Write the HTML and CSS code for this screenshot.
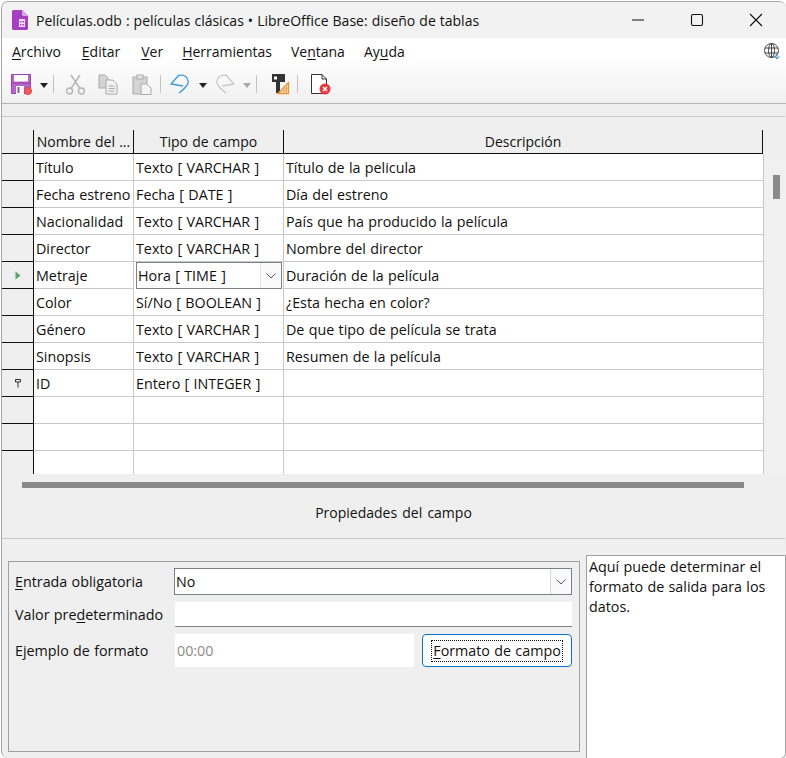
FILE: index.html
```html
<!DOCTYPE html>
<html lang="es">
<head>
<meta charset="UTF-8">
<meta name="viewport" content="width=device-width, initial-scale=1.0">
<title>Películas.odb</title>
<link rel="stylesheet" href="styles.css">
</head>
<body>
<div class="window">

    <div class="titlebar">
        <svg class="app-icon" width="18" height="22" viewBox="0 0 18 22">
            <path d="M2.5 1H11L17 7V19.500Q17 21 15.500 21H2.500Q1 21 1 19.500V2.500Q1 1 2.500 1Z" fill="#a63fc4"/>
            <path d="M11 1L17 7H12.500Q11 7 11 5.500Z" fill="#d9a6e6"/>
            <path d="M8 10H14V18H8ZM9 12H10.500V13.500H9ZM11.500 12H13V13.500H11.500ZM9 15H10.500V16.500H9ZM11.500 15H13V16.500H11.500Z" fill="#f3dff8" fill-rule="evenodd"/>
        </svg>
        <span class="title-text">Películas.odb : películas clásicas • LibreOffice Base: diseño de tablas</span>
        <div class="win-btns">
            <svg width="14" height="14" viewBox="0 0 14 14"><path d="M1 7H13" stroke="#111" stroke-width="1.100"/></svg>
            <svg width="14" height="14" viewBox="0 0 14 14"><rect x="1.500" y="1.500" width="11" height="11" rx="1.500" fill="none" stroke="#111" stroke-width="1.100"/></svg>
            <svg width="14" height="14" viewBox="0 0 14 14"><path d="M1 1L13 13M13 1L1 13" stroke="#111" stroke-width="1.100"/></svg>
        </div>
    </div>

    <div class="bars">
        <div class="menubar">
            <span class="m1"><u>A</u>rchivo</span>
            <span class="m2"><u>E</u>ditar</span>
            <span class="m3"><u>V</u>er</span>
            <span class="m4"><u>H</u>erramientas</span>
            <span class="m5">Ve<u>n</u>tana</span>
            <span class="m6">Ay<u>u</u>da</span>
            <svg class="globe" width="17" height="17" viewBox="0 0 17 17">
                <g fill="none" stroke="#444" stroke-width="1">
                    <circle cx="7.500" cy="7.500" r="7"/>
                    <ellipse cx="7.500" cy="7.500" rx="3" ry="7"/>
                    <path d="M1 5H14M1 10H14M7.500 .5V14.500"/>
                </g>
                <path d="M13 10V16M10.500 13.500L13 16L15.500 13.500" fill="none" stroke="#2f8fd8" stroke-width="1"/>
            </svg>
        </div>
        <div class="toolbar">
            <svg class="t-save" width="21" height="21" viewBox="0 0 21 21">
                <path d="M.5 .5H19.500V19.500H.5Z" fill="#b565c9" stroke="#9c46ad"/>
                <rect x="3" y="1" width="14" height="6.500" fill="#fff"/>
                <rect x="1" y="8" width="18" height="2" fill="#a552b8"/>
                <rect x="5" y="12" width="8" height="8" fill="#fff"/>
                <rect x="6.500" y="13" width="2" height="6" fill="#9c46ad"/>
                <circle cx="17" cy="17" r="3.500" fill="#f0605f" stroke="#e0403f"/>
            </svg>
            <span class="arrow t-a1"></span>
            <span class="sep t-s1"></span>
            <svg class="t-cut" width="19" height="21" viewBox="0 0 19 21">
                <g fill="none" stroke="#b4b4b4" stroke-width="1.400">
                    <circle cx="3.500" cy="17" r="3"/>
                    <circle cx="15.500" cy="17" r="3"/>
                    <path d="M5 14.500L14 1M14 14.500L5 1"/>
                </g>
            </svg>
            <svg class="t-copy" width="20" height="21" viewBox="0 0 20 21">
                <path d="M1 1H7L10 4V14H1Z" fill="#d4d4d4" stroke="#aaa"/>
                <path d="M8 6H15L19 10V20H8Z" fill="#f2f2f2" stroke="#aaa"/>
                <path d="M10.500 12H16.500M10.500 14.500H16.500M10.500 17H16.500" stroke="#aaa"/>
            </svg>
            <svg class="t-paste" width="20" height="21" viewBox="0 0 20 21">
                <path d="M1 3H15V20H1Z" fill="#d4d4d4" stroke="#aaa"/>
                <rect x="5" y="1" width="6" height="4" fill="#e6e6e6" stroke="#aaa"/>
                <path d="M9 10H15L19 14V20.500H9Z" fill="#f4f4f4" stroke="#aaa"/>
            </svg>
            <span class="sep t-s2"></span>
            <svg class="t-undo" width="20" height="20" viewBox="0 0 20 20">
                <path d="M9 1L1 10L13 12M8 2C14 -1 19 4 18 9C17 13 13 16 9 19" fill="none" stroke="#3a96dc" stroke-width="1.300"/>
            </svg>
            <span class="arrow t-a2"></span>
            <svg class="t-redo" width="20" height="20" viewBox="0 0 20 20">
                <path d="M11 1L19 10L7 12M12 2C6 -1 1 4 2 9C3 13 7 16 11 19" fill="none" stroke="#c8c8c8" stroke-width="1.300"/>
            </svg>
            <span class="arrow grey t-a3"></span>
            <span class="sep t-s3"></span>
            <svg class="t-key" width="18" height="21" viewBox="0 0 18 21">
                <path d="M0 0H13V8H8V19H4V8H0Z" fill="#333"/>
                <rect x="2" y="2.500" width="3" height="3" fill="#fff"/>
                <path d="M6 19.500L16.500 8.500V19.500Z" fill="#fbd9ae" stroke="#e8943a" stroke-width="1.300"/>
                <path d="M11 17L14.500 13.300V17Z" fill="#fff" stroke="#e8943a"/>
            </svg>
            <span class="sep t-s4"></span>
            <svg class="t-doc" width="20" height="21" viewBox="0 0 20 21">
                <path d="M.5 .5H11L15.500 5V19.500H.5Z" fill="#fff" stroke="#333"/>
                <path d="M11 .5V5H15.500" fill="none" stroke="#333"/>
                <circle cx="14" cy="15" r="5.500" fill="#e8383d"/>
                <path d="M12 13L16 17M16 13L12 17" stroke="#fff" stroke-width="1.500"/>
            </svg>
        </div>
    </div>

    <div class="sub-strip"></div>

    <div class="grid-area">
        <div class="grid-table">
            <div class="row head">
                <div class="handle"></div>
                <div class="cell c1 hc">Nombre del ...</div>
                <div class="cell c2 hc">Tipo de campo</div>
                <div class="cell c3 hc">Descripción</div>
            </div>
            <div class="row"><div class="handle"></div><div class="cell c1">Título</div><div class="cell c2">Texto [ VARCHAR ]</div><div class="cell c3">Título de la pelicula</div></div>
            <div class="row"><div class="handle"></div><div class="cell c1">Fecha estreno</div><div class="cell c2">Fecha [ DATE ]</div><div class="cell c3">Día del estreno</div></div>
            <div class="row"><div class="handle"></div><div class="cell c1">Nacionalidad</div><div class="cell c2">Texto [ VARCHAR ]</div><div class="cell c3">País que ha producido la película</div></div>
            <div class="row"><div class="handle"></div><div class="cell c1">Director</div><div class="cell c2">Texto [ VARCHAR ]</div><div class="cell c3">Nombre del director</div></div>
            <div class="row">
                <div class="handle">
                    <svg width="6" height="9" viewBox="0 0 6 9"><path d="M.5 .5L5.500 4.500L.5 8.500Z" fill="#5aa469"/></svg>
                </div>
                <div class="cell c1">Metraje</div>
                <div class="cell c2 active">
                    <div class="combo">
                        <span class="combo-text">Hora [ TIME ]</span>
                        <span class="combo-btn"><svg width="10" height="6" viewBox="0 0 10 6"><path d="M.5 .5L5 5L9.500 .5" fill="none" stroke="#555"/></svg></span>
                    </div>
                </div>
                <div class="cell c3">Duración de la película</div>
            </div>
            <div class="row"><div class="handle"></div><div class="cell c1">Color</div><div class="cell c2">Sí/No [ BOOLEAN ]</div><div class="cell c3">¿Esta hecha en color?</div></div>
            <div class="row"><div class="handle"></div><div class="cell c1">Género</div><div class="cell c2">Texto [ VARCHAR ]</div><div class="cell c3">De que tipo de película se trata</div></div>
            <div class="row"><div class="handle"></div><div class="cell c1">Sinopsis</div><div class="cell c2">Texto [ VARCHAR ]</div><div class="cell c3">Resumen de la película</div></div>
            <div class="row">
                <div class="handle">
                    <svg width="6" height="9" viewBox="0 0 6 9"><path d="M.5 .5H5.500V3H.5ZM3 3V8.500" fill="none" stroke="#333"/></svg>
                </div>
                <div class="cell c1">ID</div><div class="cell c2">Entero [ INTEGER ]</div><div class="cell c3"></div>
            </div>
            <div class="row"><div class="handle"></div><div class="cell c1"></div><div class="cell c2"></div><div class="cell c3"></div></div>
            <div class="row"><div class="handle"></div><div class="cell c1"></div><div class="cell c2"></div><div class="cell c3"></div></div>
            <div class="row last"><div class="handle"></div><div class="cell c1"></div><div class="cell c2"></div><div class="cell c3"></div></div>
        </div>
        <div class="vscroll"><div class="vthumb"></div></div>
    </div>

    <div class="hscroll"><div class="hthumb"></div></div>

    <div class="props-title">Propiedades del campo</div>

    <div class="props">
        <div class="group">
            <div class="form-row r1">
                <label class="form-label"><u>E</u>ntrada obligatoria</label>
                <div class="select">
                    <span>No</span>
                    <span class="select-btn"><svg width="10" height="6" viewBox="0 0 10 6"><path d="M.5 .5L5 5L9.500 .5" fill="none" stroke="#555"/></svg></span>
                </div>
            </div>
            <div class="form-row r2">
                <label class="form-label">Valor pre<u>d</u>eterminado</label>
                <div class="input"></div>
            </div>
            <div class="form-row r3">
                <label class="form-label">Ejemplo de formato</label>
                <div class="sample">00:00</div>
                <button class="format-btn"><span class="focus-box"><u>F</u>ormato de campo</span></button>
            </div>
        </div>
        <div class="help">Aquí puede determinar el formato de salida para los datos.</div>
    </div>

</div>
</body>
</html>
```

FILE: styles.css
```css
* {
    box-sizing: border-box;
}
html, body {
    margin: 0;
    padding: 0;
    background: #fff;
}
body {
    width: 786px;
    height: 758px;
    overflow: hidden;
    padding: 1px 0 0 1px;
    font-family: "Open Sans", "Liberation Sans", sans-serif;
    font-size: 14px;
    color: #111;
}
u {
    text-underline-offset: 2px;
}
.window {
    width: 785px;
    height: 757px;
    background: #efefef;
    border: 1px solid #a8a8a8;
    border-right: none;
    border-bottom: none;
    border-radius: 7px 7px 0 7px;
    overflow: hidden;
}

/* title bar */
.titlebar {
    height: 36px;
    background: #f2f2f2;
    display: flex;
    align-items: center;
    padding-left: 9px;
}
.app-icon {
    margin-right: 7px;
}
.title-text {
    flex: 1;
    word-spacing: .4px;
}
.win-btns {
    display: flex;
    gap: 45px;
    padding-right: 23px;
    align-items: center;
}

/* menu + toolbar */
.bars {
    height: 66px;
    background: linear-gradient(#fff 0%, #fff 30%, #f0f0f0 100%);
    border-bottom: 1px solid #b4b4b4;
}
.menubar {
    height: 26px;
    display: flex;
    align-items: center;
    padding-left: 10px;
}
.m1 { margin-right: 21px; }
.m2 { margin-right: 21px; }
.m3 { margin-right: 19px; }
.m4 { margin-right: 19px; }
.m5 { margin-right: 19px; }
.globe {
    margin-left: auto;
    margin-right: 5px;
}
.toolbar {
    height: 36px;
    margin-top: 2px;
    display: flex;
    align-items: center;
    padding-left: 9px;
}
.arrow {
    width: 0;
    height: 0;
    border-left: 4px solid transparent;
    border-right: 4px solid transparent;
    border-top: 5px solid #222;
    margin-top: 2px;
}
.arrow.grey {
    border-top-color: #aaa;
}
.sep {
    width: 1px;
    height: 18px;
    background: #c4c4c4;
}
.t-a1 { margin-left: 8px; }
.t-s1 { margin-left: 5px; }
.t-cut { margin-left: 12px; }
.t-copy { margin-left: 13px; }
.t-paste { margin-left: 14px; }
.t-s2 { margin-left: 8px; }
.t-undo { margin-left: 9px; }
.t-a2 { margin-left: 9px; }
.t-redo { margin-left: 8px; }
.t-a3 { margin-left: 8px; }
.t-s3 { margin-left: 5px; }
.t-key { margin-left: 15px; }
.t-s4 { margin-left: 7px; }
.t-doc { margin-left: 13px; }

.sub-strip {
    height: 13px;
    border-bottom: 1px solid #c8c8c8;
    margin-right: 1px;
}

/* table design grid */
.grid-area {
    display: flex;
    height: 344px;
    margin-top: 13px;
    font-size: 14.300px;
    word-spacing: .6px;
}
.grid-table {
    width: 761px;
    flex: none;
    height: 344px;
    overflow: hidden;
}
.row {
    display: flex;
    height: 27px;
    background: #fff;
}
.handle {
    width: 32px;
    flex: none;
    background: #efefef;
    border-right: 1px solid #111;
    border-bottom: 1px solid #111;
    display: flex;
    align-items: center;
    justify-content: center;
}
.cell {
    border-right: 1px solid #c8c8c8;
    border-bottom: 1px solid #c8c8c8;
    padding: 1px 0 0 2px;
    line-height: 26px;
    white-space: nowrap;
    overflow: hidden;
}
.c1 { width: 100px; }
.c2 { width: 150px; }
.c3 { width: 479px; border-right: none; }

.row.head {
    height: 24px;
    background: #efefef;
}
.hc {
    background: #efefef;
    border-right: 1px solid #111;
    border-bottom: 1px solid #111;
    padding: 0;
    font-size: 14px;
    text-align: center;
    line-height: 23px;
    word-spacing: .5px;
}
.c3.hc {
    border-right: 1px solid #111;
}
.active {
    padding: 0 1px 0 2px;
    border-bottom: none;
}
.combo {
    height: 27px;
    border: 1px solid #7a7f88;
    display: flex;
    align-items: center;
    justify-content: space-between;
    background: #fff;
}
.combo-text {
    padding: 1px 0 0 1px;
}
.combo-btn {
    width: 21px;
    height: 25px;
    background: #fafafa;
    border-left: 1px solid #e2e2e2;
    display: flex;
    align-items: center;
    justify-content: center;
}
.vscroll {
    flex: 1;
    background: #f0f0f0;
    border-left: 1px solid #c8c8c8;
    margin-top: 24px;
    height: 320px;
}
.vthumb {
    width: 7px;
    height: 24px;
    margin: 21px 0 0 9px;
    background: #8a8a8a;
}
.hscroll {
    height: 22px;
    padding: 7px 0 0 20px;
    margin-top: 1px;
}
.hthumb {
    width: 722px;
    height: 6px;
    background: #8a8a8a;
}

.props-title {
    height: 42px;
    text-align: center;
    line-height: 32px;
    border-bottom: 1px solid #c8c8c8;
    margin-right: 1px;
    word-spacing: 1.500px;
}

/* field properties */
.props {
    display: flex;
    align-items: flex-start;
    padding: 16px 0 0 6px;
    font-size: 14.300px;
    word-spacing: .6px;
}
.group {
    width: 572px;
    height: 191px;
    margin-top: 6px;
    border: 1px solid #a0a0a0;
    padding: 6px 7px 0 6px;
}
.form-row {
    display: flex;
    align-items: center;
}
.form-label {
    width: 160px;
    flex: none;
    white-space: nowrap;
}
.r1 .form-label { width: 159px; }
.r1 { height: 27px; }
.r2 { height: 25px; margin-top: 7px; }
.r3 { height: 33px; margin-top: 7px; }
.select {
    flex: 1;
    height: 27px;
    background: #fff;
    border: 1px solid #7a7f88;
    display: flex;
    align-items: center;
    justify-content: space-between;
    padding-left: 1px;
}
.select-btn {
    width: 21px;
    height: 25px;
    background: #fafafa;
    border-left: 1px solid #d8d8d8;
    display: flex;
    align-items: center;
    justify-content: center;
}
.input {
    flex: 1;
    height: 25px;
    background: #fff;
    border-bottom: 1px solid #7f7f7f;
}
.sample {
    width: 239px;
    height: 33px;
    background: #fff;
    color: #8c8c8c;
    line-height: 33px;
    padding-left: 2px;
}
.format-btn {
    width: 150px;
    height: 33px;
    margin-left: 8px;
    background: #fff;
    border: 1px solid #0a74cc;
    border-radius: 4px;
    font: inherit;
    color: inherit;
    word-spacing: inherit;
    padding: 0;
}
.focus-box {
    border: 1px dotted #111;
    padding: 0 1px;
    display: inline-block;
    line-height: 20px;
}
.help {
    width: 200px;
    height: 204px;
    margin-left: 6px;
    background: #fff;
    border: 1px solid #a0a0a0;
    border-radius: 0 0 6px 0;
    padding: 1px 2px;
    line-height: 20px;
}
```
